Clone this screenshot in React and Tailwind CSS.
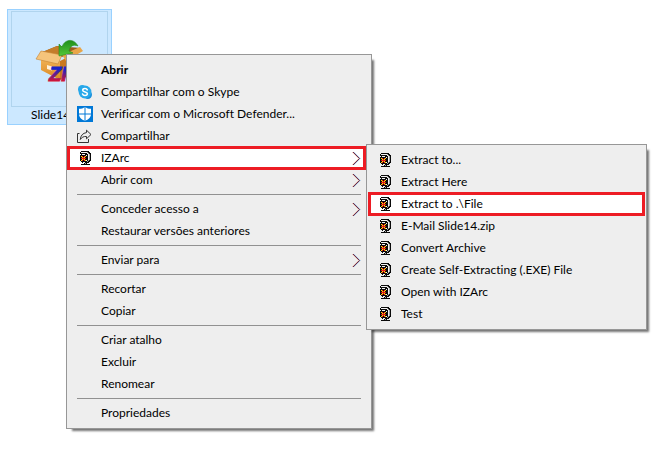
import React from 'react';
import clsx from 'clsx';

// Pixel map of the IZArc clamp icon
const CLAMP_ROWS = [
  '.KKKKKKKK..',
  'KWWWWWWGKK.',
  'KKKKKKKWGKK',
  '.KWWWKKKWGK',
  'KKKKKKWKWGK',
  'KYRKRYKKWGK',
  'KKYRYKKKWGK',
  'KRRRRRKKWGK',
  'KKYRYKKKWGK',
  'KYRKRYWKGKK',
  '.KKKKKKGKK.',
  '..KWWKKKK..',
  '....KGK....',
  '.KKKKKKKKK.',
];

const CLAMP_COLORS = { K: '#0a0a0a', W: '#f4f4f4', G: '#a8a8a8', Y: '#ffe000', R: '#e0141c' };

const ClampIcon = () => (
  <svg width="16" height="16" viewBox="0 0 16 16" shapeRendering="crispEdges" aria-hidden="true">
    {CLAMP_ROWS.map((row, y) =>
      row.split('').map((cell, x) =>
        cell === '.' ? null : (
          <rect key={`${x}-${y}`} x={x + 3} y={y + 1} width="1" height="1" fill={CLAMP_COLORS[cell]} />
        )
      )
    )}
  </svg>
);

const SkypeIcon = () => (
  <svg width="16" height="16" viewBox="0 0 16 16" aria-hidden="true">
    <circle cx="5.2" cy="5.2" r="4.2" fill="#28a8ea" />
    <circle cx="10.8" cy="10.8" r="4.2" fill="#1b90dc" />
    <circle cx="8" cy="8" r="6.4" fill="#28a8ea" />
    <path
      d="M10.3 5.9C9.9 4.9 9 4.6 8 4.6c-1.300 0-2.300.6-2.300 1.700 0 2.300 4.700 1.200 4.700 3.400 0 1.100-1.100 1.700-2.400 1.700-1.100 0-2.100-.4-2.500-1.500"
      fill="none"
      stroke="#fff"
      strokeWidth="1.500"
      strokeLinecap="round"
    />
  </svg>
);

const DefenderIcon = () => (
  <svg width="16" height="16" viewBox="0 0 16 16" aria-hidden="true">
    <rect width="16" height="16" fill="#0078d7" />
    <path d="M8 1C6.300 2.300 4.400 2.800 2 2.800V8c0 3.300 2.500 5.400 6 7 3.500-1.600 6-3.700 6-7V2.800c-2.400 0-4.300-.5-6-1.800z" fill="#fff" />
    <path d="M8 1v14M2 8h12" stroke="#0078d7" strokeWidth="1" />
  </svg>
);

const ShareIcon = () => (
  <svg width="16" height="16" viewBox="0 0 16 16" fill="none" stroke="#333" strokeWidth="1" aria-hidden="true">
    <path d="M2.500 5.500h-2v9h11V11" />
    <path d="M9.500 2.200L14 6.500 9.500 10.800V8.500C6.500 8.300 4.800 9.300 3.300 11.500 3.600 7.600 5.800 5 9.500 4.600z" />
  </svg>
);

const Arrow = () => (
  <svg width="9" height="15" viewBox="0 0 9 15" fill="none" strokeWidth="1" aria-hidden="true">
    <path d="M.5 1l6.500 6.500L.5 14" stroke="#e8a080" />
    <path d="M1.500 1l6.500 6.500L1.500 14" stroke="#7fb2e0" />
    <path d="M1 1l6.500 6.500L1 14" stroke="#6a2f50" />
  </svg>
);

const ArchiveIcon = () => (
  <svg width="50" height="50" viewBox="0 0 50 50" aria-hidden="true">
    <defs>
      <linearGradient id="front" x1="0" y1="0" x2="0" y2="1">
        <stop offset="0" stopColor="#f3b65a" />
        <stop offset="1" stopColor="#d98722" />
      </linearGradient>
      <linearGradient id="arrow" x1="0" y1="0" x2="0" y2="1">
        <stop offset="0" stopColor="#1f8f1c" />
        <stop offset="1" stopColor="#55c83a" />
      </linearGradient>
      <linearGradient id="letters" x1="0" y1="0" x2="0" y2="1">
        <stop offset="0.3" stopColor="#1a22c8" />
        <stop offset="0.9" stopColor="#f01220" />
      </linearGradient>
    </defs>
    <path d="M5 19L22 12 46 14 27 23z" fill="#9a5d1c" />
    <path d="M5 19L22 12 25 13 24 22z" fill="#c47d2a" />
    <path d="M6 23L25 27 25 46 6 36z" fill="url(#front)" />
    <path d="M25 27L43 18 43 37 25 46z" fill="#c9781f" />
    <path d="M6 17L27 21 23 30 1 25z" fill="#f5c47b" stroke="#c58332" strokeWidth="0.6" />
    <path d="M27 21L45 13 48 17 31 27z" fill="#e9a548" />
    <path d="M12 31l5 1.500v4L12 35z" fill="#fff1d8" />
    <path d="M24 10l3 3C29 6 38 3 43 12 38 10 35 12 34 17l4 2-14 3z" fill="url(#arrow)" stroke="#258c1e" strokeWidth="0.6" />
    <text x="14" y="47" fontFamily="Liberation Sans, sans-serif" fontSize="20" fontWeight="700" fontStyle="italic" fill="url(#letters)" stroke="url(#letters)">
      ZIP
    </text>
  </svg>
);

const MAIN_MENU = [
  [
    { label: 'Abrir', bold: true },
    { label: 'Compartilhar com o Skype', icon: SkypeIcon },
    { label: 'Verificar com o Microsoft Defender...', icon: DefenderIcon },
    { label: 'Compartilhar', icon: ShareIcon },
    { label: 'IZArc', icon: ClampIcon, submenu: true, highlight: '-my-px mr-[5px] pl-[7px] pr-[2px]' },
    { label: 'Abrir com', submenu: true },
  ],
  [{ label: 'Conceder acesso a', submenu: true }, { label: 'Restaurar versões anteriores' }],
  [{ label: 'Enviar para', submenu: true }],
  [{ label: 'Recortar' }, { label: 'Copiar' }],
  [{ label: 'Criar atalho' }, { label: 'Excluir' }, { label: 'Renomear' }],
  [{ label: 'Propriedades' }],
];

const IZARC_MENU = [
  [
    { label: 'Extract to...', icon: ClampIcon },
    { label: 'Extract Here', icon: ClampIcon },
    { label: 'Extract to .\\File', icon: ClampIcon, highlight: '-my-px mx-px pl-[6px]' },
    { label: 'E-Mail Slide14.zip', icon: ClampIcon },
    { label: 'Convert Archive', icon: ClampIcon },
    { label: 'Create Self-Extracting (.EXE) File', icon: ClampIcon },
    { label: 'Open with IZArc', icon: ClampIcon },
    { label: 'Test', icon: ClampIcon },
  ],
];

const MenuItem = ({ label, icon: Icon, bold, submenu, highlight }) => (
  <button
    type="button"
    role="menuitem"
    className={clsx(
      'flex items-center gap-2 text-left whitespace-nowrap',
      highlight ? ['h-6 border-3 border-[#ed1c24] bg-white', highlight] : 'h-[22px] px-[10px] hover:bg-white',
      bold && 'font-bold'
    )}
  >
    <span className="w-4 shrink-0">{Icon && <Icon />}</span>
    <span className="grow">{label}</span>
    {submenu && <Arrow />}
  </button>
);

const Menu = ({ groups, label, className }) => (
  <div
    role="menu"
    aria-label={label}
    className={clsx(
      'absolute flex flex-col border border-[#979797] bg-[#eee] py-1 shadow-[4px_4px_2px_-2px_rgba(0,0,0,0.55)]',
      className
    )}
  >
    {groups.map((items, index) => (
      <React.Fragment key={index}>
        {index > 0 && <hr className="mx-[10px] my-[3px] border-t border-[#919191]" />}
        {items.map((item) => (
          <MenuItem key={item.label} {...item} />
        ))}
      </React.Fragment>
    ))}
  </div>
);

export default function App() {
  return (
    <main className="relative min-h-screen overflow-hidden bg-white font-[Lato,'Noto_Sans',sans-serif] text-[12px] leading-4 text-black [font-variant-ligatures:none]">
      {/* Desktop file */}
      <figure className="absolute top-[9px] left-[7px] flex w-[105px] flex-col items-center border border-[#99d1ff] bg-[#cce8ff] px-[3px] pt-px">
        <div className="flex h-24 w-full items-center justify-center border border-[#b0d4ee]">
          <ArchiveIcon />
        </div>
        <figcaption className="pb-px">Slide14.zip</figcaption>
      </figure>

      <Menu groups={MAIN_MENU} label="Slide14.zip" className="top-[54px] left-[66px] w-[306px]" />
      <Menu groups={IZARC_MENU} label="IZArc" className="top-[144px] left-[366px] w-[281px]" />
    </main>
  );
}
